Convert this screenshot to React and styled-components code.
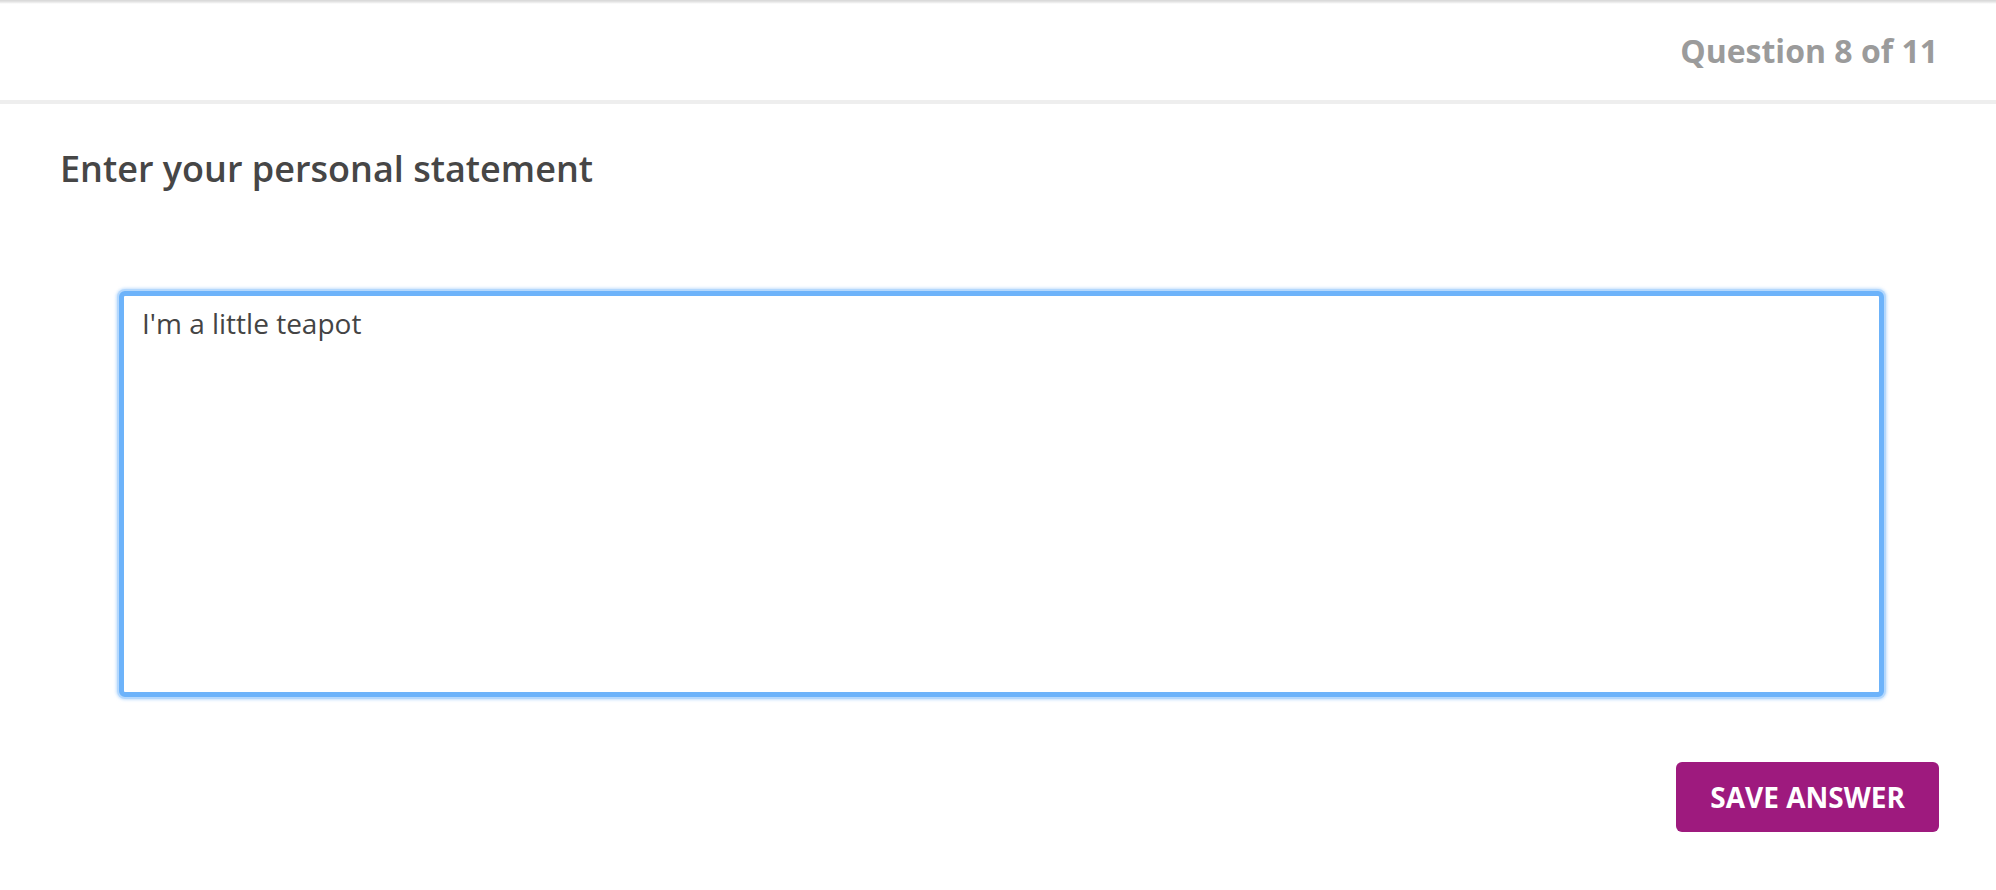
import React, { useEffect, useRef } from 'react';
import styled, { createGlobalStyle } from 'styled-components';

const GlobalStyle = createGlobalStyle`
  html, body {
    margin: 0;
    padding: 0;
    background: #fff;
    font-family: "Open Sans", "Noto Sans", Arial, sans-serif;
  }
  * {
    box-sizing: border-box;
  }
`;

const Page = styled.div`
  display: flex;
  flex-direction: column;
  min-height: 890px;
  background: #fff;
`;

const Header = styled.header`
  height: 104px;
  display: flex;
  align-items: center;
  justify-content: flex-end;
  padding: 2px 58px 0 60px;
  background: linear-gradient(to bottom, #d6d6d6 0, #e6e6e6 2px, #f4f4f4 3px, #fff 4px);
  border-bottom: 4px solid #eeeeee;
`;

const Progress = styled.span`
  font-size: 32px;
  font-weight: 700;
  color: #9b9b9b;
  line-height: 1.4;
`;

const Content = styled.main`
  display: flex;
  flex-direction: column;
  padding: 38px 57px 58px 60px;
`;

const Title = styled.h1`
  margin: 0;
  font-size: 36px;
  font-weight: 600;
  line-height: 54px;
  color: #464646;
`;

const Answer = styled.textarea`
  display: block;
  margin: 95px 55px 0 59px;
  height: 406px;
  padding: 6px 18px;
  font-family: "Open Sans", "Noto Sans", Arial, sans-serif;
  font-size: 28px;
  line-height: 1.5;
  color: #444;
  background: #fff;
  border: 5px solid #6db3fa;
  border-radius: 6px;
  box-shadow: 0 0 0 2px #b4d8fd, 0 0 3px 3px rgba(160, 205, 252, 0.6);
  resize: none;
  outline: none;
  caret-color: #222;
`;

const Actions = styled.div`
  display: flex;
  justify-content: flex-end;
  margin-top: 65px;
`;

const SaveButton = styled.button`
  height: 70px;
  padding: 0 34px;
  border: none;
  border-radius: 6px;
  background: #9e1a7e;
  color: #fff;
  font-family: "Open Sans", "Noto Sans", Arial, sans-serif;
  font-size: 28px;
  font-weight: 700;
  text-transform: uppercase;
  cursor: pointer;
`;

export default function App() {
  const answerRef = useRef(null);

  useEffect(() => {
    const el = answerRef.current;
    if (el) {
      el.focus();
      el.setSelectionRange(el.value.length, el.value.length);
    }
  }, []);

  return (
    <Page>
      <GlobalStyle />
      <Header>
        <Progress>Question 8 of 11</Progress>
      </Header>
      <Content>
        <Title>Enter your personal statement</Title>
        <Answer ref={answerRef} defaultValue="I'm a little teapot" />
        <Actions>
          <SaveButton>Save answer</SaveButton>
        </Actions>
      </Content>
    </Page>
  );
}
